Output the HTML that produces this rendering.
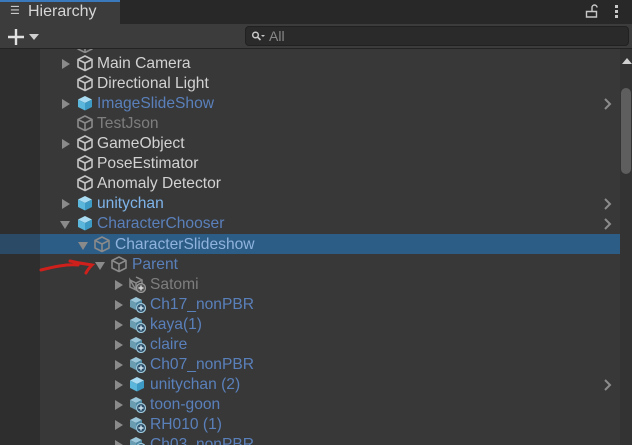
<!DOCTYPE html><html><head><style>
html,body{margin:0;width:632px;height:445px;overflow:hidden}
body{background:#383838;font-family:"Liberation Sans",sans-serif;position:relative}
.a{position:absolute}
.row{position:absolute;left:0;width:620px;height:20px;font-size:15.6px;line-height:20px}
.t{position:absolute;top:1px;white-space:nowrap}
.ar{position:absolute;top:6px;width:0;height:0;border-top:5px solid transparent;border-bottom:5px solid transparent;border-left:8px solid #8a8a8a}
.dn{position:absolute;top:8px;width:0;height:0;border-left:5px solid transparent;border-right:5px solid transparent;border-top:8px solid #8a8a8a}
svg.i{position:absolute;top:1px;width:18px;height:18px}
.ch{position:absolute;left:603px;top:5px;width:10px;height:12px}
</style></head><body>
<div class="a" style="left:0;top:0;width:632px;height:24px;background:#282828"></div>
<div class="a" style="left:0;top:0;width:120px;height:24px;background:#3c3c3c;border-top:2px solid #3a79bb;box-sizing:border-box"></div>
<div class="a" style="left:10px;top:6px;color:#c8c8c8;font-size:11px;line-height:11px">&#9776;</div>
<div class="a" style="left:28px;top:3px;color:#d6d6d6;font-size:16px">Hierarchy</div>
<svg class="a" style="left:585px;top:4px" width="14" height="14"><path d="M1.5 7.5h10v5.5h-10z M7 7.5V3.5a2.5 2.5 0 0 1 5 0" fill="none" stroke="#c8c8c8" stroke-width="1.4"/></svg>
<div class="a" style="left:615px;top:5px;width:3px;height:3px;background:#c8c8c8;box-shadow:0 5px #c8c8c8,0 10px #c8c8c8"></div>
<div class="a" style="left:0;top:24px;width:632px;height:24px;background:#3c3c3c;border-bottom:1px solid #232323"></div>
<svg class="a" style="left:7px;top:28px" width="18" height="18"><path d="M9 1v16M1 9h16" stroke="#e0e0e0" stroke-width="2.4"/></svg>
<div class="a" style="left:29px;top:34px;border-left:5px solid transparent;border-right:5px solid transparent;border-top:6px solid #d0d0d0"></div>
<div class="a" style="left:245px;top:26px;width:384px;height:20px;background:#2a2a2a;border:1px solid #212121;border-radius:4px;box-sizing:border-box"></div>
<svg class="a" style="left:251px;top:30px" width="14" height="12"><circle cx="4.5" cy="5" r="2.8" fill="none" stroke="#c8c8c8" stroke-width="1.5"/><path d="M6.5 7l3 3" stroke="#c8c8c8" stroke-width="1.6"/><path d="M10 5l2 2 2-2" fill="#c8c8c8"/></svg>
<div class="a" style="left:269px;top:28px;color:#888;font-size:14px">All</div>
<div class="a" style="left:0;top:49px;width:40px;height:396px;background:#2e2e2e"></div>
<div class="a" style="left:620px;top:49px;width:12px;height:396px;background:#333"></div>
<div class="a" style="left:621px;top:88px;width:10px;height:86px;background:#5e5e5e;border-radius:5px"></div>
<div class="a" style="left:622px;top:58px;border-left:5px solid transparent;border-right:5px solid transparent;border-bottom:6px solid #d0d0d0"></div>
<div class="a" style="left:40px;top:234px;width:580px;height:20px;background:#2c5d87"></div>
<div class="a" style="left:0;top:234px;width:40px;height:20px;background:#2b4a66"></div>
<svg width="0" height="0" style="position:absolute"><defs>
<g id="c"><path d="M9 2 L16 5.5 L16 13 L9 16.5 L2 13 L2 5.5 Z M2 5.5 L9 9 L16 5.5 M9 9 L9 16.5" fill="none" stroke="#c4c4c4" stroke-width="1.6" stroke-linejoin="round"/></g>
<g id="cg"><path d="M9 2 L16 5.5 L16 13 L9 16.5 L2 13 L2 5.5 Z M2 5.5 L9 9 L16 5.5 M9 9 L9 16.5" fill="none" stroke="#8a8a8a" stroke-width="1.6" stroke-linejoin="round"/></g>
<g id="p"><path d="M9 2 L16 5.5 L9 9 L2 5.5Z" fill="#a9dcf2"/><path d="M2 5.5 L9 9 L9 16.5 L2 13Z" fill="#5ab6db"/><path d="M16 5.5 L9 9 L9 16.5 L16 13Z" fill="#3d9ac4"/></g>
<g id="pv"><path d="M8 2 L14 5 L8 8 L2 5Z" fill="#9cc7da"/><path d="M2 5 L8 8 L8 15 L2 12Z" fill="#6a9cb2"/><path d="M14 5 L8 8 L8 15 L14 12Z" fill="#4e8aa5"/><circle cx="13" cy="13" r="4.5" fill="#2b4b66" stroke="#9cc7da" stroke-width="1.2"/><path d="M13 10.5v5M10.5 13h5" stroke="#cfe6f2" stroke-width="1.4"/></g>
<g id="sv"><path d="M8 2 L14 5 L14 11 M8 15 L2 12 L2 5 Z M2 5 L8 8 L14 5 M8 8 L8 15" fill="none" stroke="#8a8a8a" stroke-width="1.5"/><circle cx="13" cy="13" r="4.5" fill="#555" stroke="#9a9a9a" stroke-width="1.2"/><path d="M13 10.5v5M10.5 13h5" stroke="#ddd" stroke-width="1.4"/></g>
<g id="chv"><path d="M2 1l5 5-5 5" fill="none" stroke="#8c8c8c" stroke-width="2"/></g>
</defs></svg>
<div class="a" style="left:76px;top:49px;width:18px;height:4px;overflow:hidden"><svg width="18" height="18" style="position:absolute;top:-13px"><use href="#cg"/></svg></div>
<div class="row" style="top:53px"><div class="ar" style="left:62px"></div><svg class="i" style="left:76px"><use href="#c"/></svg><span class="t" style="left:97px;color:#d2d2d2">Main Camera</span></div>
<div class="row" style="top:73px"><svg class="i" style="left:76px"><use href="#c"/></svg><span class="t" style="left:97px;color:#d2d2d2">Directional Light</span></div>
<div class="row" style="top:93px"><div class="ar" style="left:62px"></div><svg class="i" style="left:76px"><use href="#p"/></svg><span class="t" style="left:97px;color:#5a80bb">ImageSlideShow</span><svg class="ch"><use href="#chv"/></svg></div>
<div class="row" style="top:113px"><svg class="i" style="left:76px"><use href="#cg"/></svg><span class="t" style="left:97px;color:#7e7e7e">TestJson</span></div>
<div class="row" style="top:133px"><div class="ar" style="left:62px"></div><svg class="i" style="left:76px"><use href="#c"/></svg><span class="t" style="left:97px;color:#d2d2d2">GameObject</span></div>
<div class="row" style="top:153px"><svg class="i" style="left:76px"><use href="#c"/></svg><span class="t" style="left:97px;color:#d2d2d2">PoseEstimator</span></div>
<div class="row" style="top:173px"><svg class="i" style="left:76px"><use href="#c"/></svg><span class="t" style="left:97px;color:#d2d2d2">Anomaly Detector</span></div>
<div class="row" style="top:193px"><div class="ar" style="left:62px"></div><svg class="i" style="left:76px"><use href="#p"/></svg><span class="t" style="left:97px;color:#7fb4ea">unitychan</span><svg class="ch"><use href="#chv"/></svg></div>
<div class="row" style="top:213px"><div class="dn" style="left:60px"></div><svg class="i" style="left:76px"><use href="#p"/></svg><span class="t" style="left:97px;color:#5a80bb">CharacterChooser</span><svg class="ch"><use href="#chv"/></svg></div>
<div class="row" style="top:234px"><div class="dn" style="left:78px"></div><svg class="i" style="left:93px"><use href="#cg"/></svg><span class="t" style="left:115px;color:#8fb3dc">CharacterSlideshow</span></div>
<div class="row" style="top:254px"><div class="dn" style="left:95px"></div><svg class="i" style="left:110px"><use href="#cg"/></svg><span class="t" style="left:132px;color:#5a80bb">Parent</span></div>
<svg class="a" style="left:38px;top:256px" width="60" height="20"><path d="M3 14 C15 11 28 8 40 9 M32 5 C40 7 48 8 54 9 C52 11 50 13 48 17" fill="none" stroke="#d0201c" stroke-width="3" stroke-linecap="round"/></svg>
<div class="row" style="top:274px"><div class="ar" style="left:115px"></div><svg class="i" style="left:128px"><use href="#sv"/></svg><span class="t" style="left:150px;color:#7e7e7e">Satomi</span></div>
<div class="row" style="top:294px"><div class="ar" style="left:115px"></div><svg class="i" style="left:128px"><use href="#pv"/></svg><span class="t" style="left:150px;color:#5a80bb">Ch17_nonPBR</span></div>
<div class="row" style="top:314px"><div class="ar" style="left:115px"></div><svg class="i" style="left:128px"><use href="#pv"/></svg><span class="t" style="left:150px;color:#5a80bb">kaya(1)</span></div>
<div class="row" style="top:334px"><div class="ar" style="left:115px"></div><svg class="i" style="left:128px"><use href="#pv"/></svg><span class="t" style="left:150px;color:#5a80bb">claire</span></div>
<div class="row" style="top:354px"><div class="ar" style="left:115px"></div><svg class="i" style="left:128px"><use href="#pv"/></svg><span class="t" style="left:150px;color:#5a80bb">Ch07_nonPBR</span></div>
<div class="row" style="top:374px"><div class="ar" style="left:115px"></div><svg class="i" style="left:128px"><use href="#p"/></svg><span class="t" style="left:150px;color:#5a80bb">unitychan (2)</span><svg class="ch"><use href="#chv"/></svg></div>
<div class="row" style="top:394px"><div class="ar" style="left:115px"></div><svg class="i" style="left:128px"><use href="#pv"/></svg><span class="t" style="left:150px;color:#5a80bb">toon-goon</span></div>
<div class="row" style="top:414px"><div class="ar" style="left:115px"></div><svg class="i" style="left:128px"><use href="#pv"/></svg><span class="t" style="left:150px;color:#5a80bb">RH010 (1)</span></div>
<div class="row" style="top:434px;height:11px;overflow:hidden"><div class="ar" style="left:115px"></div><svg class="i" style="left:128px"><use href="#pv"/></svg><span class="t" style="left:150px;color:#5a80bb">Ch03_nonPBR</span></div>
</body></html>
